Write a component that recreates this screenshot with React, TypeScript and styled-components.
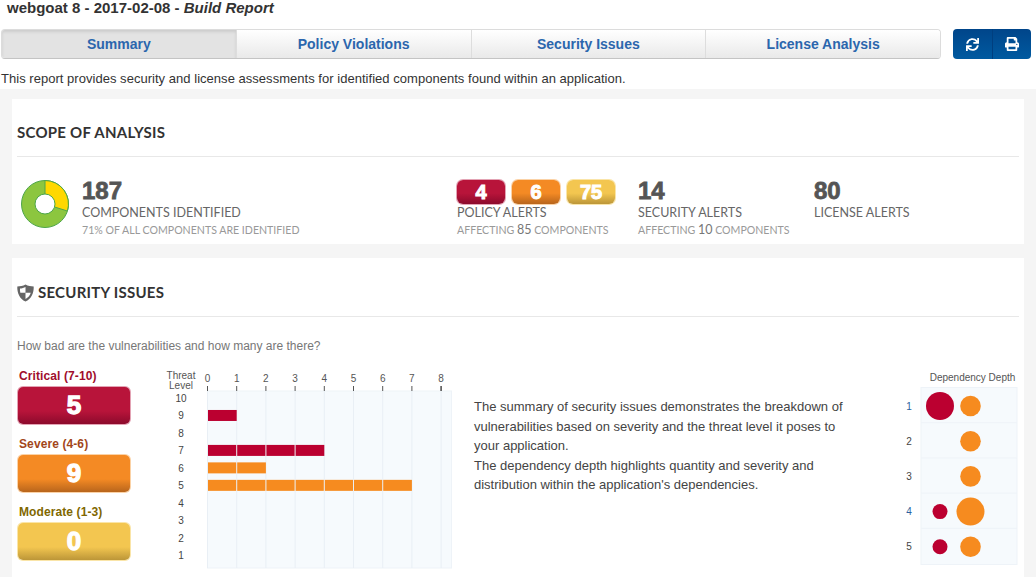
import React from "react";
import styled, { createGlobalStyle } from "styled-components";
import { FaPrint, FaSync } from "react-icons/fa";

const GlobalStyle = createGlobalStyle`
  html, body {
    margin: 0;
    padding: 0;
    height: 100%;
    overflow: hidden;
    background: #fff;
    font-family: "Liberation Sans", Arial, sans-serif;
  }
`;

const TABS = ["Summary", "Policy Violations", "Security Issues", "License Analysis"];

const TONES = {
  critical: { top: "#bb0030", mid: "#b8143a", bottom: "#8c0a2c", edge: "#e3a3b4", label: "#a00d2c" },
  severe: { top: "#f68b1f", mid: "#f48a24", bottom: "#b8651c", edge: "#fbd2a6", label: "#a2461a" },
  moderate: { top: "#f5c84f", mid: "#f3c650", bottom: "#bc9638", edge: "#fae5a8", label: "#7f6700" },
};
type Tone = keyof typeof TONES;

const THREAT_ROWS: { level: number; count: number; color?: string }[] = [
  { level: 10, count: 0 },
  { level: 9, count: 1, color: "#bb0030" },
  { level: 8, count: 0 },
  { level: 7, count: 4, color: "#bb0030" },
  { level: 6, count: 2, color: "#f68b1f" },
  { level: 5, count: 7, color: "#f68b1f" },
  { level: 4, count: 0 },
  { level: 3, count: 0 },
  { level: 2, count: 0 },
  { level: 1, count: 0 },
];

const DEPTH_ROWS: { red: number; orange: number }[] = [
  { red: 14, orange: 10.3 },
  { red: 0, orange: 10.3 },
  { red: 0, orange: 10.3 },
  { red: 7.5, orange: 14 },
  { red: 7.5, orange: 10.3 },
];

function ThreatChart() {
  const step = 29.2;
  const rowStep = 17.47;
  const x0 = 47.5;
  const y0 = 26;
  return (
    <ChartSvg width={295} height={204} viewBox="0 0 295 204">
      <rect x={x0} y={y0} width={244} height={177} fill="#f6fafd" stroke="#eef3f8" />
      <text x={21} y={13.5} textAnchor="middle" fontSize={10} fill="#555">Threat</text>
      <text x={21} y={23.5} textAnchor="middle" fontSize={10} fill="#555">Level</text>
      {Array.from({ length: 9 }, (_, i) => {
        const x = x0 + i * step;
        return (
          <g key={i}>
            <text x={x} y={17} textAnchor="middle" fontSize={10} fill="#555">{i}</text>
            <line x1={x} x2={x} y1={21} y2={26} stroke="#555" strokeWidth={i === 8 ? 1.6 : 1} />
            <line x1={x} x2={x} y1={26} y2={203} stroke="#e9eff5" />
          </g>
        );
      })}
      {THREAT_ROWS.map((row, r) => {
        const cy = y0 + 7.5 + r * rowStep;
        return (
          <g key={row.level}>
            <text x={21} y={cy + 3.5} textAnchor="middle" fontSize={10} fill="#444">{row.level}</text>
            {Array.from({ length: row.count }, (_, c) => (
              <rect
                key={c}
                x={x0 + 0.5 + c * step}
                y={cy - 6}
                width={step - (c === row.count - 1 ? 0.5 : 1)}
                height={11}
                fill={row.color}
              />
            ))}
          </g>
        );
      })}
    </ChartSvg>
  );
}

function DepthChart() {
  const rowH = 35.2;
  return (
    <DepthSvg width={120} height={193} viewBox="0 0 120 193">
      <text x={74.5} y={9} textAnchor="middle" fontSize={10} fill="#555">Dependency Depth</text>
      <rect x={23} y={15.5} width={96} height={177} fill="#f6fafd" stroke="#eef3f8" />
      {DEPTH_ROWS.map((row, i) => {
        const cy = 34 + i * rowH;
        return (
          <g key={i}>
            <text x={11} y={cy + 3.5} textAnchor="middle" fontSize={10} fill={i === 0 || i === 3 ? "#2a5f9e" : "#444"}>{i + 1}</text>
            {i > 0 && <line x1={23} x2={119} y1={15.5 + i * rowH} y2={15.5 + i * rowH} stroke="#eef3f8" />}
            {row.red > 0 && <circle cx={42} cy={cy} r={row.red} fill="#bb0030" />}
            <circle cx={72.5} cy={cy} r={row.orange} fill="#f68b1f" />
          </g>
        );
      })}
    </DepthSvg>
  );
}

export default function App() {
  return (
    <Page>
      <GlobalStyle />
      <Title>webgoat 8 - 2017-02-08 - <em>Build Report</em></Title>
      <TopBar>
        <Tabs>
          {TABS.map((t, i) => (
            <Tab key={t} $active={i === 0}>{t}</Tab>
          ))}
        </Tabs>
        <Actions>
          <ActionButton><FaSync size={13} /></ActionButton>
          <ActionButton><FaPrint size={14} /></ActionButton>
        </Actions>
      </TopBar>
      <Intro>This report provides security and license assessments for identified components found within an application.</Intro>
      <Panel>
        <Card>
          <CardTitle>SCOPE OF ANALYSIS</CardTitle>
          <Scope>
            <Donut width={50} height={50} viewBox="0 0 50 50">
              <circle cx={25} cy={25} r={23.5} fill="#8cc63f" stroke="#4ea64a" strokeWidth={1} />
              <path d="M25 1.5 A23.5 23.5 0 0 1 47.4 32 L25 25 Z" fill="#ffd800" stroke="#4ea64a" strokeWidth={1} />
              <circle cx={25} cy={25} r={10} fill="#fff" stroke="#4ea64a" strokeWidth={1} />
            </Donut>
            <StatBlock $width={375}>
              <BigNumber>187</BigNumber>
              <StatLabel>COMPONENTS IDENTIFIED</StatLabel>
              <StatNote>71% OF ALL COMPONENTS ARE IDENTIFIED</StatNote>
            </StatBlock>
            <StatBlock $width={181}>
              <Pills>
                <Pill $tone="critical">4</Pill>
                <Pill $tone="severe">6</Pill>
                <Pill $tone="moderate">75</Pill>
              </Pills>
              <StatLabel>POLICY ALERTS</StatLabel>
              <StatNote>AFFECTING <b>85</b> COMPONENTS</StatNote>
            </StatBlock>
            <StatBlock $width={176}>
              <BigNumber>14</BigNumber>
              <StatLabel>SECURITY ALERTS</StatLabel>
              <StatNote>AFFECTING <b>10</b> COMPONENTS</StatNote>
            </StatBlock>
            <StatBlock $width={120}>
              <BigNumber>80</BigNumber>
              <StatLabel>LICENSE ALERTS</StatLabel>
            </StatBlock>
          </Scope>
        </Card>
        <LastCard>
          <SecurityTitle>
            <svg width={17} height={18} viewBox="0 0 17 18">
              <path d="M8.5 0.5 C11 2 14 2.4 16.7 2.4 C17 9 14.2 14.8 8.5 17.5 C2.8 14.8 0 9 0.3 2.4 C3 2.4 6 2 8.5 0.5 Z" fill="#666" />
              <path d="M8.5 3 L8.5 8.7 L3.3 8.7 C3 7.4 2.9 6 3 4.6 C5 4.4 7 3.9 8.5 3 Z" fill="#fff" />
              <path d="M8.5 8.7 L13.7 8.7 C13 11.4 11 13.6 8.5 15 Z" fill="#fff" />
            </svg>
            SECURITY ISSUES
          </SecurityTitle>
          <Question>How bad are the vulnerabilities and how many are there?</Question>
          <SecurityBody>
            <Severities>
              <Severity>
                <SeverityLabel $tone="critical">Critical (7-10)</SeverityLabel>
                <SeverityTile $tone="critical">5</SeverityTile>
              </Severity>
              <Severity>
                <SeverityLabel $tone="severe">Severe (4-6)</SeverityLabel>
                <SeverityTile $tone="severe">9</SeverityTile>
              </Severity>
              <Severity>
                <SeverityLabel $tone="moderate">Moderate (1-3)</SeverityLabel>
                <SeverityTile $tone="moderate">0</SeverityTile>
              </Severity>
            </Severities>
            <ThreatChart />
            <Summary>
              The summary of security issues demonstrates the breakdown of vulnerabilities based on severity and the threat level it poses to your application.
              <br />
              The dependency depth highlights quantity and severity and distribution within the application's dependencies.
            </Summary>
            <DepthChart />
          </SecurityBody>
        </LastCard>
      </Panel>
    </Page>
  );
}

const Page = styled.div`
  height: 577px;
  overflow: hidden;
`;

const Title = styled.div`
  height: 29px;
  padding: 0 0 0 7px;
  font-size: 15px;
  line-height: 16px;
  font-weight: bold;
  color: #333;
`;

const TopBar = styled.div`
  display: flex;
  padding: 0 5px 0 1px;
  gap: 12px;
`;

const Tabs = styled.div`
  display: flex;
  width: 940px;
  height: 30px;
  box-sizing: border-box;
  border: 1px solid #dcdcdc;
  border-bottom-color: #c4c4c4;
  border-radius: 4px;
  overflow: hidden;
`;

const Tab = styled.div<{ $active?: boolean }>`
  flex: 1;
  display: flex;
  align-items: center;
  justify-content: center;
  font-size: 14px;
  font-weight: bold;
  color: #2b66ad;
  border-left: 1px solid #ddd;
  background: ${(p) =>
    p.$active ? "#e3e3e3" : "linear-gradient(to bottom, #fff, #e9e9e9)"};
  box-shadow: ${(p) => (p.$active ? "inset 0 2px 3px #ccc" : "none")};
  &:first-child {
    border-left: none;
  }
`;

const Actions = styled.div`
  display: flex;
  width: 78px;
  height: 30px;
  border-radius: 4px;
  overflow: hidden;
`;

const ActionButton = styled.div`
  flex: 1;
  display: flex;
  align-items: center;
  justify-content: center;
  color: #fff;
  background: linear-gradient(to bottom, #00458a, #005aa0);
  & + & {
    border-left: 1px solid #003f7f;
  }
`;

const Intro = styled.div`
  height: 30px;
  padding: 12px 0 0 1px;
  box-sizing: border-box;
  font-size: 13px;
  line-height: 15px;
  letter-spacing: 0.03px;
  color: #333;
`;

const Panel = styled.div`
  background: #f5f5f5;
  padding: 10px 12px;
  display: flex;
  flex-direction: column;
  gap: 14px;
`;

const Card = styled.div`
  background: #fff;
  padding: 0 5px;
`;

const LastCard = styled(Card)`
  padding-bottom: 30px;
`;

const CardTitle = styled.div`
  height: 58px;
  box-sizing: border-box;
  padding-top: 25px;
  font-family: Lato, sans-serif;
  font-size: 15px;
  line-height: 17px;
  letter-spacing: 0.25px;
  font-weight: 700;
  color: #333;
  border-bottom: 1px solid #e8e8e8;
`;

const SecurityTitle = styled(CardTitle)`
  display: flex;
  align-items: flex-start;
  gap: 4px;
  height: 59px;
  padding-top: 26px;
`;

const Scope = styled.div`
  display: flex;
  height: 87px;
  padding-top: 22px;
  box-sizing: border-box;
  padding-left: 3px;
`;

const Donut = styled.svg`
  margin-top: 0;
  margin-right: 12px;
`;

const StatBlock = styled.div<{ $width: number }>`
  width: ${(p) => p.$width}px;
  display: flex;
  flex-direction: column;
  font-family: Lato, sans-serif;
`;

const BigNumber = styled.div`
  height: 25px;
  font-family: "Liberation Sans", Arial, sans-serif;
  font-size: 24px;
  line-height: 24px;
  font-weight: bold;
  color: #555;
  -webkit-text-stroke: 0.8px #555;
`;

const StatLabel = styled.div`
  height: 17px;
  font-size: 12.5px;
  line-height: 18px;
  color: #666;
`;

const StatNote = styled.div`
  font-size: 10.6px;
  line-height: 18px;
  color: #999;
  b {
    font-size: 12.5px;
    font-weight: 400;
    color: #777;
  }
`;

const Pills = styled.div`
  display: flex;
  gap: 7px;
  height: 25px;
  padding-top: 1px;
  box-sizing: border-box;
`;

const Pill = styled.div<{ $tone: Tone }>`
  width: 48px;
  height: 24px;
  border-radius: 6px;
  display: flex;
  align-items: center;
  justify-content: center;
  font-family: "Liberation Sans", Arial, sans-serif;
  font-size: 20px;
  font-weight: bold;
  color: #fff;
  -webkit-text-stroke: 1px #fff;
  background: linear-gradient(to bottom, ${(p) => TONES[p.$tone].mid} 55%, ${(p) => TONES[p.$tone].bottom});
  box-shadow: 0 0 0 1px ${(p) => TONES[p.$tone].edge};
`;

const Question = styled.div`
  padding-top: 22px;
  height: 48px;
  box-sizing: border-box;
  font-size: 12px;
  line-height: 14px;
  color: #777;
`;

const SecurityBody = styled.div`
  display: flex;
  align-items: flex-start;
`;

const Severities = styled.div`
  width: 112px;
  margin-left: 1px;
  margin-right: 30px;
  display: flex;
  flex-direction: column;
  gap: 13px;
  padding-top: 4px;
`;

const Severity = styled.div`
  display: flex;
  flex-direction: column;
  gap: 3px;
`;

const SeverityLabel = styled.div<{ $tone: Tone }>`
  padding-left: 1px;
  font-size: 12px;
  line-height: 15px;
  letter-spacing: 0.1px;
  font-weight: bold;
  color: ${(p) => TONES[p.$tone].label};
`;

const SeverityTile = styled.div<{ $tone: Tone }>`
  height: 37px;
  border-radius: 5px;
  display: flex;
  align-items: center;
  justify-content: center;
  font-size: 26px;
  font-weight: bold;
  color: #fff;
  -webkit-text-stroke: 1.3px #fff;
  background: linear-gradient(to bottom, ${(p) => TONES[p.$tone].mid} 65%, ${(p) => TONES[p.$tone].bottom});
  box-shadow: 0 0 0 1px ${(p) => TONES[p.$tone].edge};
`;

const ChartSvg = styled.svg`
  flex: none;
  font-family: "Liberation Sans", Arial, sans-serif;
`;

const DepthSvg = styled(ChartSvg)`
  margin-top: 7px;
`;

const Summary = styled.div`
  width: 380px;
  margin: 32px 44px 0 19px;
  flex: none;
  font-size: 13px;
  line-height: 19.5px;
  color: #444;
`;
